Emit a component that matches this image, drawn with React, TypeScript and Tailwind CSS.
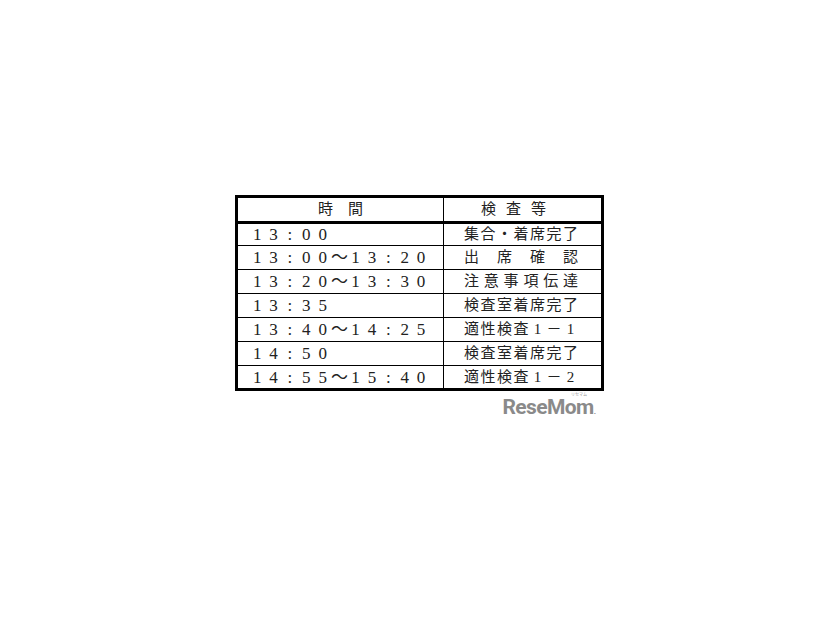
import React from "react";

const rows: { time: string; item: string; h: string }[] = [
  { time: "13:00", item: "集合・着席完了", h: "h-[22px]" },
  { time: "13:00～13:20", item: "出席確認", h: "h-[24px]" },
  { time: "13:20～13:30", item: "注意事項伝達", h: "h-[24px]" },
  { time: "13:35", item: "検査室着席完了", h: "h-[24px]" },
  { time: "13:40～14:25", item: "適性検査1－1", h: "h-[24px]" },
  { time: "14:50", item: "検査室着席完了", h: "h-[24px]" },
  { time: "14:55～15:40", item: "適性検査1－2", h: "h-[22px]" },
];

const font = {
  fontFamily: '"Liberation Serif", "Noto Sans CJK JP", serif',
};

function TimeCell({ text }: { text: string }) {
  return (
    <div className="flex items-center pl-[11px] text-[17px] leading-none">
      {Array.from(text).map((c, i) => (
        <span key={i} className="inline-block w-[16.4px] text-center">
          {c}
        </span>
      ))}
    </div>
  );
}

function ItemCell({ text }: { text: string }) {
  return (
    <div className="ml-[20px] flex w-[114px] items-center justify-between text-[15px] leading-none">
      {Array.from(text).map((c, i) => (
        <span key={i} className="inline-block w-[15px] text-center">
          {c}
        </span>
      ))}
    </div>
  );
}

export default function App() {
  return (
    <div className="min-h-[620px] w-[826px] bg-white text-[#222222]" style={font}>
      <div className="flex flex-col pl-[235px] pt-[195px]">
        <div className="w-[369px] border-[3px] border-black">
          <div className="flex h-[26px] border-b-[3px] border-black">
            <div className="flex w-[206px] items-center justify-center border-r border-black text-[15px] leading-none">
              時　間
            </div>
            <div className="flex w-[156px] items-center gap-[10px] pl-[37px] text-[15px] leading-none">
              <span>検</span>
              <span>査</span>
              <span>等</span>
            </div>
          </div>
          {rows.map((r, i) => (
            <div
              key={i}
              className={`flex ${r.h} ${i < rows.length - 1 ? "border-b border-black" : ""}`}
            >
              <div className="flex w-[206px] items-center border-r border-black">
                <TimeCell text={r.time} />
              </div>
              <div className="flex w-[156px] items-center">
                <ItemCell text={r.item} />
              </div>
            </div>
          ))}
        </div>
        <div className="flex w-[369px] justify-end pr-[8px] pt-[1px]">
          <div className="flex flex-col items-end">
            <span
              className="mr-[9px] mb-[1px] h-[5px] text-[4px] leading-[5px] text-[#9a9a9a]"
              style={{ fontFamily: '"Noto Sans CJK JP", sans-serif' }}
            >
              リセマム
            </span>
            <div className="flex items-baseline">
              <span
                className="text-[21px] font-bold leading-[18px] tracking-[-0.6px] text-[#8a8a8a]"
                style={{ fontFamily: 'Roboto, "Liberation Sans", sans-serif' }}
              >
                ReseMom
              </span>
              <span
                className="text-[8px] font-bold leading-none text-[#8a8a8a]"
                style={{ fontFamily: 'Roboto, "Liberation Sans", sans-serif' }}
              >
                .
              </span>
            </div>
          </div>
        </div>
      </div>
    </div>
  );
}
